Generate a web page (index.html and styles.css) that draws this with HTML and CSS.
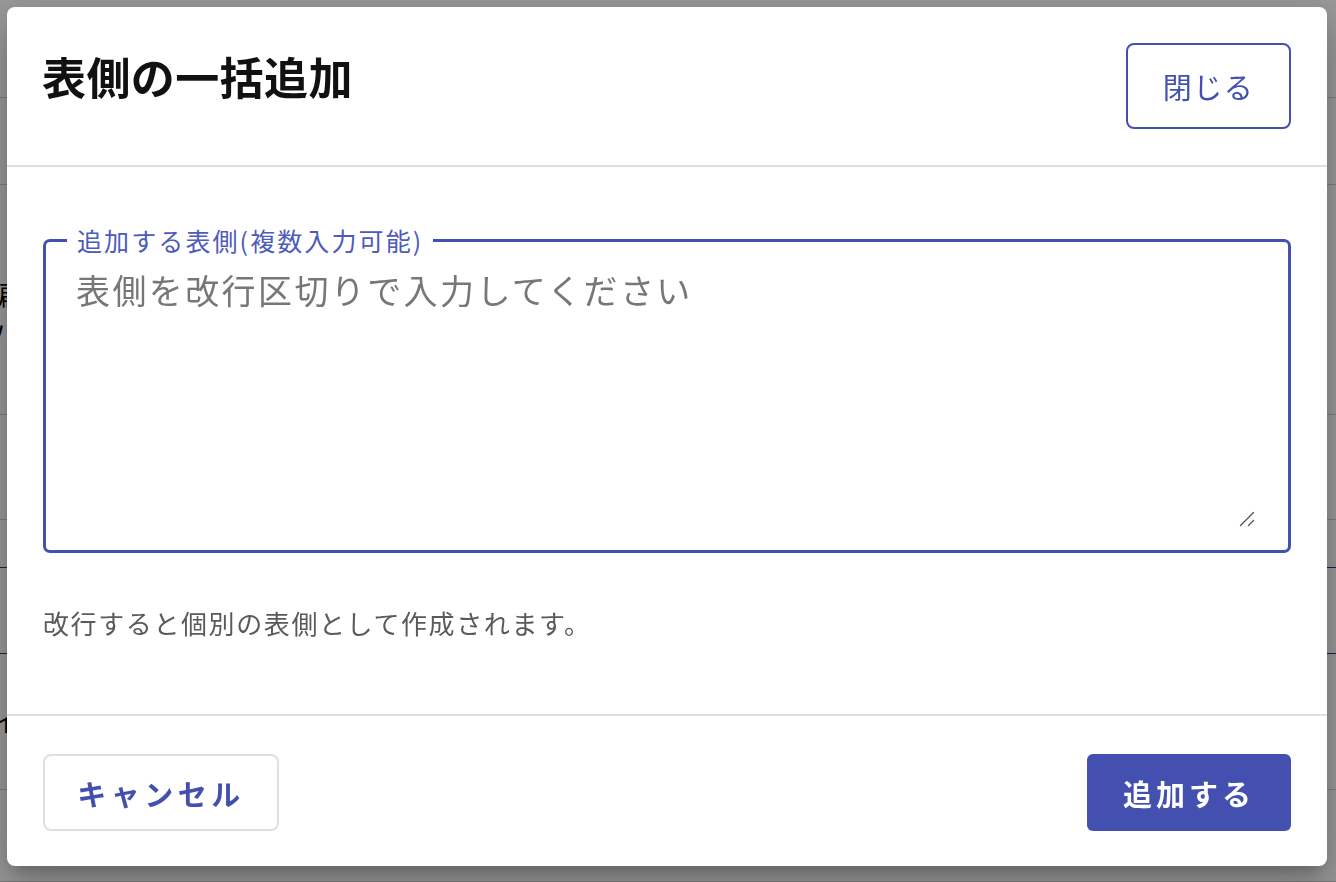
FILE: index.html
```html
<!DOCTYPE html>
<html lang="ja">
<head>
<meta charset="utf-8">
<title>表側の一括追加</title>
<link rel="stylesheet" href="styles.css">
</head>
<body>
<div class="page">
  <div class="row r1"></div>
  <div class="row r2"></div>
  <div class="row r3"><p class="bgtext">偏<br>ハ</p></div>
  <div class="row r4"></div>
  <div class="row r5"></div>
  <div class="row r6 blue"></div>
  <div class="row r7"><p class="bgtext low">イ</p></div>
  <div class="row r8"></div>
</div>
<div class="backdrop">
  <div class="dialog" role="dialog">
    <header class="dlg-head">
      <h1 class="dlg-title">表側の一括追加</h1>
      <button class="btn btn-outline">閉じる</button>
    </header>
    <section class="dlg-body">
      <div class="field">
        <span class="field-label">追加する表側(複数入力可能)</span>
        <textarea class="field-input" placeholder="表側を改行区切りで入力してください"></textarea>
        <svg class="grip" width="16" height="16" viewBox="0 0 16 16" aria-hidden="true">
          <path d="M1.5 14.5 L14.5 1.5 M9.5 14.5 L14.5 9.5" stroke="#555" stroke-width="1.3" stroke-linecap="round" fill="none"/>
        </svg>
      </div>
      <p class="helper">改行すると個別の表側として作成されます。</p>
    </section>
    <footer class="dlg-foot">
      <button class="btn btn-cancel">キャンセル</button>
      <button class="btn btn-primary">追加する</button>
    </footer>
  </div>
</div>
</body>
</html>
```

FILE: styles.css
```css
* { box-sizing: border-box; }
html, body {
  margin: 0;
  padding: 0;
  height: 100%;
  overflow: hidden;
}
body {
  font-family: "Noto Sans CJK JP", "Noto Sans", sans-serif;
  background: #fff;
  color: #111;
}
.page {
  display: flex;
  flex-direction: column;
}
.row { border-bottom: 1px solid #d0d0d0; }
.r1 { height: 98px; }
.r2 { height: 87px; }
.r3 { height: 230px; }
.r4 { height: 105px; }
.r5 { height: 48px; border-bottom-color: #2b3990; }
.r6 { height: 86px; border-bottom-color: #2b3990; }
.r7 { height: 136px; }
.r8 { height: 92px; }
.bgtext {
  margin: 90px 0 0 -8px;
  font-size: 26px;
  line-height: 38px;
  color: #000;
}
.bgtext.low { margin-top: 48px; }

.backdrop {
  position: fixed;
  inset: 0;
  background: rgba(0, 0, 0, 0.4);
  padding: 7px 9px 16px 7px;
}
.dialog {
  background: #fff;
  border-radius: 8px;
  height: 859px;
  display: flex;
  flex-direction: column;
  box-shadow: 0 11px 15px -7px rgba(0,0,0,.2), 0 24px 38px 3px rgba(0,0,0,.14), 0 9px 46px 8px rgba(0,0,0,.12);
}
.dlg-head {
  display: flex;
  justify-content: space-between;
  align-items: flex-start;
  padding: 36px 36px 36px 35px;
  height: 160px;
  border-bottom: 2px solid #e0e0e0;
}
.dlg-title {
  margin: 0;
  font-size: 44px;
  line-height: 66px;
  font-weight: 700;
  letter-spacing: 0.4px;
  color: #111;
}
.btn {
  font-family: "Noto Sans CJK JP", "Noto Sans", sans-serif;
  cursor: pointer;
  background: #fff;
  border-radius: 8px;
}
.btn-outline {
  height: 86px;
  width: 165px;
  border: 2px solid #4350af;
  color: #4350af;
  font-size: 29px;
  letter-spacing: 1.5px;
  font-weight: 400;
}
.dlg-body {
  padding: 72px 36px 72px 36px;
  border-bottom: 2px solid #e0e0e0;
}
.field {
  position: relative;
  height: 314px;
  border: 3px solid #4350af;
  border-radius: 7px;
  padding: 21px 32px 22px 30px;
  display: flex;
}
.field-label {
  position: absolute;
  top: -20px;
  left: 21px;
  padding: 0 10px;
  background: #fff;
  color: #4d5bbb;
  font-size: 25px;
  line-height: 36px;
  letter-spacing: 2.1px;
}
.field-input {
  flex: 1;
  border: none;
  outline: none;
  padding: 0;
  margin: 0;
  resize: vertical;
  font-family: "Noto Sans CJK JP", "Noto Sans", sans-serif;
  font-size: 34px;
  line-height: 54px;
  letter-spacing: 2.4px;
  color: #333;
  background: transparent;
}
.field-input::-webkit-resizer {
  background: transparent;
}
.field-input::placeholder { color: #777; }
.grip {
  position: absolute;
  right: 33px;
  bottom: 23px;
  pointer-events: none;
}
.helper {
  margin: 50px 0 0 0;
  font-size: 26px;
  line-height: 39px;
  letter-spacing: 1.6px;
  color: #5a5a5a;
}
.dlg-foot {
  display: flex;
  justify-content: space-between;
  align-items: flex-start;
  padding: 38px 36px 35px 36px;
}
.btn-cancel {
  height: 77px;
  width: 236px;
  border: 2px solid #e0e0e0;
  color: #4350af;
  font-size: 29px;
  font-weight: 700;
  letter-spacing: 4.5px;
}
.btn-primary {
  height: 77px;
  width: 204px;
  border: none;
  border-radius: 6px;
  background: #4350af;
  color: #fff;
  font-size: 29px;
  font-weight: 700;
  letter-spacing: 4px;
}
```
